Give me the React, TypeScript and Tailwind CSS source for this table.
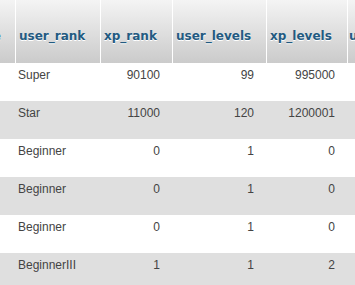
import React from "react";

const rows = [
  ["Super", "90100", "99", "995000"],
  ["Star", "11000", "120", "1200001"],
  ["Beginner", "0", "1", "0"],
  ["Beginner", "0", "1", "0"],
  ["Beginner", "0", "1", "0"],
  ["BeginnerIII", "1", "1", "2"],
];

export default function App() {
  return (
    <div className="w-[355px] h-[285px] overflow-hidden bg-white">
      <div className="w-[420px]">
        {/* header */}
        <div className="flex h-[63px] bg-gradient-to-b from-[#f4f4f4] to-[#cbcbcb] font-['DejaVu_Sans',sans-serif] font-bold text-[12px] leading-[15px] text-[#235a81] [text-shadow:0_1px_0_#fff]">
          <div className="w-[16px] shrink-0 border-r border-white overflow-hidden flex justify-end pt-[29px]">
            <span className="mr-[14px]">e</span>
          </div>
          <div className="w-[85px] shrink-0 border-r border-white pt-[29px] pl-[3px] whitespace-nowrap">
            user_rank
          </div>
          <div className="w-[72px] shrink-0 border-r border-white pt-[29px] pl-[3px] whitespace-nowrap">
            xp_rank
          </div>
          <div className="w-[94px] shrink-0 border-r border-white pt-[29px] pl-[3px] whitespace-nowrap">
            user_levels
          </div>
          <div className="w-[81px] shrink-0 border-r border-white pt-[29px] pl-[3px] whitespace-nowrap">
            xp_levels
          </div>
          <div className="w-[70px] shrink-0 pt-[29px] pl-[1px] whitespace-nowrap">
            user_id
          </div>
        </div>
        {/* body */}
        {rows.map((r, i) => (
          <div
            key={i}
            className={`flex h-[38px] font-['Liberation_Sans',Arial,sans-serif] text-[12px] leading-[15px] text-[#444] ${
              i % 2 === 0 ? "bg-white" : "bg-[#dfdfdf]"
            }`}
          >
            <div className="w-[16px] shrink-0" />
            <div className="w-[85px] shrink-0 pt-[5px] pl-[2px] whitespace-nowrap">{r[0]}</div>
            <div className="w-[72px] shrink-0 pt-[5px] pr-[13px] text-right whitespace-nowrap">{r[1]}</div>
            <div className="w-[94px] shrink-0 pt-[5px] pr-[13px] text-right whitespace-nowrap">{r[2]}</div>
            <div className="w-[81px] shrink-0 pt-[5px] pr-[13px] text-right whitespace-nowrap">{r[3]}</div>
            <div className="w-[70px] shrink-0" />
          </div>
        ))}
      </div>
    </div>
  );
}
